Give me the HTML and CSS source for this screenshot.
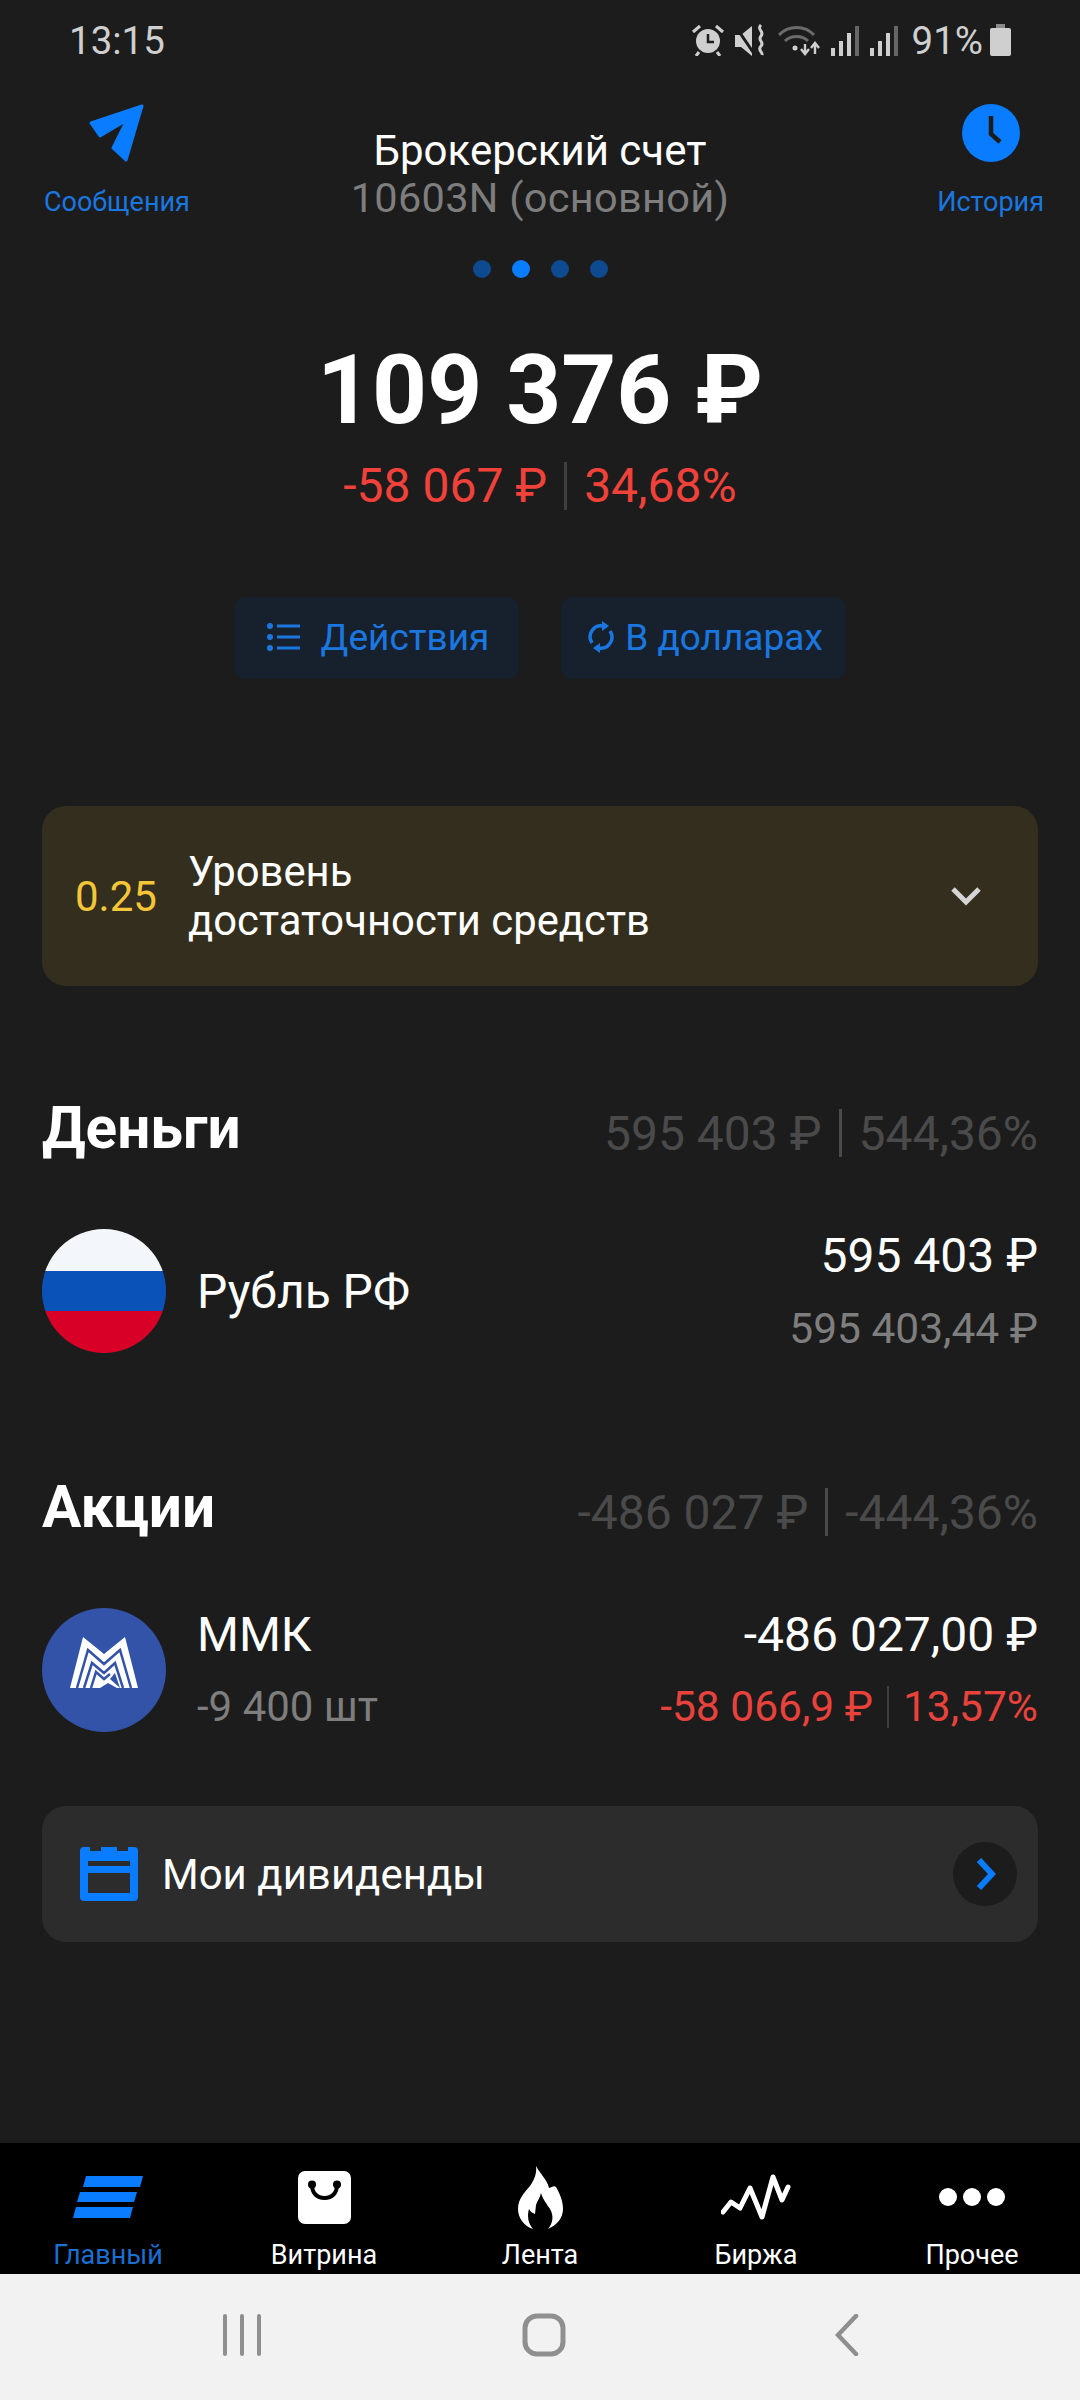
FILE: index.html
```html
<!DOCTYPE html>
<html lang="ru">
<head>
    <meta charset="UTF-8">
    <title>Брокерский счет</title>
    <link rel="stylesheet" href="styles.css">
</head>
<body>
    <div class="screen">
        <div class="status">
            <span class="time">13:15</span>
            <div class="status-icons">
                <svg width="32" height="32" viewBox="0 0 32 32"><circle cx="16" cy="17" r="12" fill="#cfcfcf"/><path d="M16 10v8h6" fill="none" stroke="#1c1c1c" stroke-width="2.5"/><path d="M1 8l7-6M31 8l-7-6M7 28l-3 4M25 28l3 4" stroke="#cfcfcf" stroke-width="3"/></svg>
                <svg width="32" height="32" viewBox="0 0 32 32"><path d="M0 11h6l11-9v30l-11-9H0z" fill="#cfcfcf"/><path d="M1 3l19 28" stroke="#1c1c1c" stroke-width="3"/><path d="M26 1c-5 5 4 6 0 11s4 6 0 10 2 6 1 9" fill="none" stroke="#cfcfcf" stroke-width="3"/></svg>
                <svg width="42" height="32" viewBox="0 0 42 32"><path d="M1 11c9-10 26-10 35 0M7 17c6-6 17-6 23 0" fill="none" stroke="#6b6b6b" stroke-width="3"/><circle cx="17" cy="24" r="2.5" fill="#cfcfcf"/><path d="M27 20v9M23 25l4 5 4-5" fill="none" stroke="#cfcfcf" stroke-width="2.4"/><path d="M37 30v-10M33 24l4-5 4 5" fill="none" stroke="#cfcfcf" stroke-width="2.4"/></svg>
                <svg class="signal" width="28" height="32" viewBox="0 0 28 32"><rect x="0" y="24" width="4" height="8" fill="#cfcfcf"/><rect x="8" y="17" width="4" height="15" fill="#cfcfcf"/><rect x="16" y="9" width="4" height="23" fill="#cfcfcf"/><rect x="24" y="2" width="4" height="30" fill="#666"/></svg>
                <svg class="signal" width="28" height="32" viewBox="0 0 28 32"><rect x="0" y="24" width="4" height="8" fill="#cfcfcf"/><rect x="8" y="17" width="4" height="15" fill="#cfcfcf"/><rect x="16" y="9" width="4" height="23" fill="#cfcfcf"/><rect x="24" y="2" width="4" height="30" fill="#666"/></svg>
                <span class="percent">91%</span>
                <svg width="21" height="32" viewBox="0 0 21 32"><rect x="6" y="0" width="9" height="5" fill="#8a8a8a"/><rect x="0" y="4" width="21" height="28" rx="2" fill="#cfcfcf"/></svg>
            </div>
        </div>

        <div class="head">
            <a class="head-link left">
                <svg width="58" height="58" viewBox="0 0 58 58"><path d="M3 19L54 2 38 56 25 44 39 16 12 32z" fill="#0a7cff" stroke="#0a7cff" stroke-width="3" stroke-linejoin="round"/></svg>
                <span>Сообщения</span>
            </a>
            <div class="head-title">
                <div class="title">Брокерский счет</div>
                <div class="subtitle">10603N (основной)</div>
            </div>
            <a class="head-link right">
                <svg width="58" height="58" viewBox="0 0 58 58"><circle cx="29" cy="29" r="29" fill="#0a7cff"/><path d="M29 12v18l9 8" fill="none" stroke="#1c1c1c" stroke-width="4.500"/></svg>
                <span>История</span>
            </a>
        </div>

        <div class="dots">
            <i></i><i class="on"></i><i></i><i></i>
        </div>

        <div class="total">109 376 ₽</div>
        <div class="delta">-58 067 ₽<b class="sep"></b>34,68%</div>

        <div class="actions">
            <div class="btn">
                <svg width="34" height="28" viewBox="0 0 34 28"><g fill="#1b77e0"><circle cx="3" cy="3" r="3"/><circle cx="3" cy="14" r="3"/><circle cx="3" cy="25" r="3"/><rect x="10" y="1.500" width="23" height="3"/><rect x="10" y="12.500" width="23" height="3"/><rect x="10" y="23.500" width="23" height="3"/></g></svg>
                <span class="btn-gap">Действия</span>
            </div>
            <div class="btn">
                <svg width="28" height="32" viewBox="0 0 28 32"><g fill="none" stroke="#1b77e0" stroke-width="3.500"><path d="M5 22A11 11 0 0 1 16 5"/><path d="M23 10A11 11 0 0 1 12 27"/></g><path d="M15 0l7 5-7 5zM13 22l-7 5 7 5z" fill="#1b77e0"/></svg>
                <span>В долларах</span>
            </div>
        </div>

        <div class="warn">
            <span class="warn-num">0.25</span>
            <span class="warn-text">Уровень<br>достаточности средств</span>
            <svg class="warn-arrow" width="32" height="20" viewBox="0 0 32 20"><path d="M3 3l13 13L29 3" fill="none" stroke="#d5d5d5" stroke-width="5"/></svg>
        </div>

        <div class="section money">
            <h2>Деньги</h2>
            <div class="section-sum">595 403 ₽<b class="sep"></b>544,36%</div>
        </div>
        <div class="row">
            <div class="flag"></div>
            <div class="row-name">Рубль РФ</div>
            <div class="row-right">
                <div class="row-main">595 403 ₽</div>
                <div class="row-sub">595 403,44 ₽</div>
            </div>
        </div>

        <div class="section stocks">
            <h2>Акции</h2>
            <div class="section-sum">-486 027 ₽<b class="sep"></b>-444,36%</div>
        </div>
        <div class="row">
            <svg class="logo" width="124" height="124" viewBox="0 0 124 124">
                <circle cx="62" cy="62" r="62" fill="#3353a8"/>
                <path d="M28 80L41 29l21 17 21-17 13 51z" fill="#fff"/>
                <path d="M35 80l11-38 16 14 16-14 11 38M42 80l8-25 12 10 11-10 8 25" fill="none" stroke="#3353a8" stroke-width="2.500"/>
                <path d="M49 80l5-16 8 7 6-5" fill="none" stroke="#3353a8" stroke-width="2.500"/>
                <path d="M58 80l8-5 9 5zM68 71l5-6 5 15" fill="#3353a8"/>
            </svg>
            <div class="row-name">
                <div>ММК</div>
                <div class="row-count">-9 400 шт</div>
            </div>
            <div class="row-right">
                <div class="row-main">-486 027,00 ₽</div>
                <div class="row-loss">-58 066,9 ₽<b class="sep"></b>13,57%</div>
            </div>
        </div>

        <div class="divs">
            <svg width="58" height="54" viewBox="0 0 58 54"><path d="M4 0h6v4h11V0h16v4h11V0h6a4 4 0 0 1 4 4v46a4 4 0 0 1-4 4H4a4 4 0 0 1-4-4V4a4 4 0 0 1 4-4z" fill="#0a7cff"/><rect x="8" y="14" width="42" height="5" fill="#2c2c2c"/><rect x="8" y="26" width="42" height="20" fill="#2c2c2c"/></svg>
            <span class="divs-text">Мои дивиденды</span>
            <div class="divs-go">
                <svg width="22" height="34" viewBox="0 0 22 34"><path d="M5 3l13 14L5 31" fill="none" stroke="#0a7cff" stroke-width="6"/></svg>
            </div>
        </div>

        <div class="spacer"></div>

        <div class="tabs">
            <div class="tab active">
                <div class="tab-icon"><svg width="70" height="42" viewBox="0 0 70 42"><path d="M13 0h57l-3 11H10zM7 16h57l-3 10H4zM3 31h57l-3 11H0z" fill="#0a7cff"/></svg></div>
                <span>Главный</span>
            </div>
            <div class="tab">
                <div class="tab-icon"><svg width="53" height="53" viewBox="0 0 53 53"><rect width="53" height="53" rx="7" fill="#fff"/><path d="M14 14c0 8 5 13 12.500 13S39 22 39 14" fill="none" stroke="#000" stroke-width="4"/><circle cx="14" cy="13.500" r="4"/><circle cx="39" cy="13.500" r="4"/></svg></div>
                <span>Витрина</span>
            </div>
            <div class="tab">
                <div class="tab-icon"><svg width="45" height="63" viewBox="0 0 45 63"><path d="M18 0C22 8 29 13 31 22 34 21 36 19 38 21 42 28 45 35 45 43 45 52 39 59 30 63 35 57 36 50 32 43 29 38 25 34 23 27 22 32 19 35 18 39L17 48C14 47 12 45 11 43 9 50 10 57 15 63 6 60 0 52 0 43 0 33 6 27 12 20 16 14 19 8 18 0Z" fill="#fff"/></svg></div>
                <span>Лента</span>
            </div>
            <div class="tab">
                <div class="tab-icon"><svg width="70" height="46" viewBox="0 0 70 46"><path d="M2 38l8-10 9 6 10-20 12 29L52 3l9 23 6-13" fill="none" stroke="#fff" stroke-width="5" stroke-linejoin="round" stroke-linecap="round"/></svg></div>
                <span>Биржа</span>
            </div>
            <div class="tab">
                <div class="tab-icon"><svg width="66" height="18" viewBox="0 0 66 18"><circle cx="9" cy="9" r="9" fill="#fff"/><circle cx="33" cy="9" r="9" fill="#fff"/><circle cx="57" cy="9" r="9" fill="#fff"/></svg></div>
                <span>Прочее</span>
            </div>
        </div>

        <div class="nav">
            <svg width="38" height="42" viewBox="0 0 38 42"><path d="M2 2v38M19 2v38M36 2v38" stroke="#8f8f8f" stroke-width="4" stroke-linecap="round"/></svg>
            <svg class="nav-home" width="44" height="44" viewBox="0 0 44 44"><rect x="3" y="3" width="38" height="38" rx="12" fill="none" stroke="#8f8f8f" stroke-width="5"/></svg>
            <svg width="24" height="42" viewBox="0 0 24 42"><path d="M21 2L3 21l18 19" fill="none" stroke="#8f8f8f" stroke-width="4.500" stroke-linecap="round"/></svg>
        </div>
    </div>
</body>
</html>
```

FILE: styles.css
```css
* {
    box-sizing: border-box;
}

body {
    margin: 0;
    background: #1c1c1c;
    font-family: Roboto, "Noto Sans", sans-serif;
    color: #fff;
}

.screen {
    width: 1080px;
    height: 2400px;
    display: flex;
    flex-direction: column;
    overflow: hidden;
}

.status {
    height: 80px;
    padding: 0 69px 0 69px;
    display: flex;
    justify-content: space-between;
    align-items: center;
    color: #cfcfcf;
}

.time {
    font-size: 38.5px;
}

.status-icons {
    display: flex;
    align-items: center;
    gap: 11px;
}

.percent {
    font-size: 38.5px;
    margin: 0 -4px 0 3px;
}

.head {
    height: 160px;
    padding: 24px 40px 0;
    display: grid;
    grid-template-columns: 1fr auto 1fr;
}

.head-link {
    display: flex;
    flex-direction: column;
    align-items: center;
    gap: 25px;
    color: #1b77e0;
    font-size: 27px;
    line-height: 30px;
}

.head-link.left {
    justify-self: start;
    margin-left: 4px;
}

.head-link.right {
    justify-self: end;
    margin-right: -4px;
}

.head-title {
    text-align: center;
    padding-top: 23px;
}

.title {
    font-size: 42px;
    line-height: 47px;
}

.subtitle {
    font-size: 41.5px;
    line-height: 48px;
    color: #7e7e7e;
    letter-spacing: .3px;
}

.dots {
    margin-top: 20px;
    display: flex;
    justify-content: center;
    gap: 21px;
}

.dots i {
    width: 18px;
    height: 18px;
    border-radius: 50%;
    background: #0e4a8f;
}

.dots .on {
    background: #0a7cff;
}

.total {
    margin-top: 56px;
    text-align: center;
    font-size: 96px;
    line-height: 112px;
    font-weight: 700;
}

.delta {
    margin-top: 13px;
    display: flex;
    justify-content: center;
    align-items: center;
    font-size: 48px;
    line-height: 54px;
    color: #f0413a;
}

.sep {
    width: 3px;
    height: 1em;
    margin: 0 17px;
    background: #3f3f3f;
}

.actions {
    margin-top: 84px;
    display: flex;
    justify-content: center;
    gap: 42px;
}

.btn {
    width: 285px;
    height: 82px;
    border-radius: 12px;
    background: #17212e;
    padding: 0 0 2px 3px;
    display: flex;
    align-items: center;
    justify-content: center;
    gap: 10px;
    color: #1b77e0;
    font-size: 37px;
}

.btn-gap {
    margin-left: 10px;
}

.warn {
    margin: 127px 42px 0;
    height: 180px;
    border-radius: 24px;
    background: #342e1e;
    padding: 0 56px 0 33px;
    display: flex;
    align-items: center;
}

.warn-num {
    color: #f5c638;
    font-size: 42px;
    width: 113px;
}

.warn-text {
    font-size: 41.8px;
    line-height: 49px;
    flex: 1;
}

.section {
    margin: 0 42px;
    height: 66px;
    display: flex;
    justify-content: space-between;
    align-items: center;
}

.money {
    margin-top: 109px;
}

.stocks {
    margin-top: 121px;
}

.section h2 {
    margin: 0;
    font-size: 58.5px;
    line-height: 66px;
    font-weight: 700;
}

.section-sum {
    display: flex;
    align-items: center;
    margin-top: 10px;
    font-size: 48px;
    color: #4a4a4a;
}

.section-sum .sep {
    margin: 0 17px;
    background: #4a4a4a;
}

.row {
    margin: 68px 42px 0;
    height: 124px;
    display: flex;
    align-items: center;
}

.flag {
    width: 124px;
    height: 124px;
    border-radius: 50%;
    background: linear-gradient(#f3f6fa 0 33.500%, #0a51b8 33.500% 66.500%, #d80027 66.500%);
}

.row-name {
    margin-left: 31px;
    padding-top: 2px;
    font-size: 48px;
    line-height: 72px;
}

.row-count {
    color: #7e7e7e;
    font-size: 42px;
}

.row-right {
    margin-left: auto;
    padding-top: 2px;
    text-align: right;
}

.row-main {
    font-size: 48px;
    line-height: 72px;
}

.row-sub {
    font-size: 42.5px;
    line-height: 73px;
    color: #7e7e7e;
}

.row-loss {
    display: flex;
    justify-content: flex-end;
    align-items: center;
    font-size: 42.5px;
    line-height: 72px;
    color: #e8423c;
}

.row-loss .sep {
    width: 2px;
    margin: 0 14px;
}

.divs {
    margin: 74px 42px 0;
    height: 136px;
    border-radius: 24px;
    background: #2c2c2c;
    padding: 0 21px 0 38px;
    display: flex;
    align-items: center;
}

.divs-text {
    margin-left: 24px;
    font-size: 42px;
}

.divs-go {
    margin-left: auto;
    width: 64px;
    height: 64px;
    border-radius: 50%;
    background: #1c1c1c;
    display: flex;
    align-items: center;
    justify-content: center;
}

.spacer {
    flex: 1;
}

.tabs {
    height: 131px;
    background: #000;
    display: grid;
    grid-template-columns: repeat(5, 1fr);
}

.tab {
    padding-top: 22px;
    display: flex;
    flex-direction: column;
    align-items: center;
    font-size: 27px;
    line-height: 38px;
}

.tab-icon {
    height: 64px;
    margin-bottom: 7px;
    display: flex;
    align-items: center;
    justify-content: center;
}

.tab.active {
    color: #1b6fd0;
}

.nav {
    height: 126px;
    background: #f2f2f2;
    padding: 0 221px 4px 223px;
    display: flex;
    justify-content: space-between;
    align-items: center;
}

.nav-home {
    margin-right: 8px;
}
```
